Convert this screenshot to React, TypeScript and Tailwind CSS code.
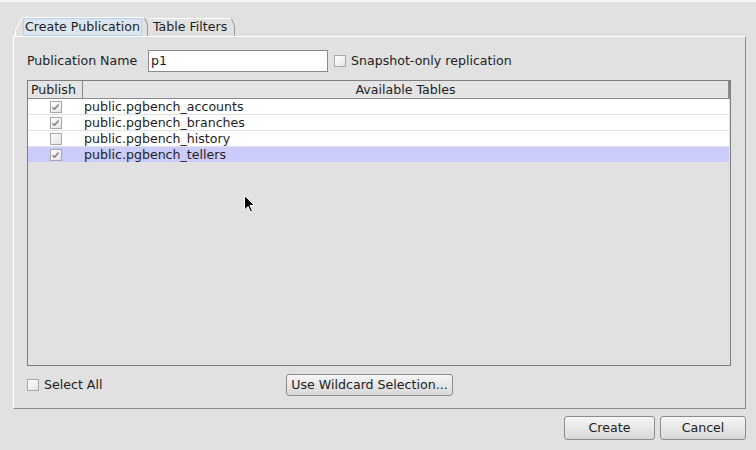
import React from "react";

const Check = ({ checked }: { checked: boolean }) => (
  <div className="w-[12px] h-[12px] border border-[#a8a8a8] bg-gradient-to-br from-[#ffffff] to-[#e4e4e4] flex items-center justify-center">
    {checked && (
      <svg width="9" height="8" viewBox="0 0 9 8">
        <path d="M1.5 4.2 L3.5 6.2 L7.5 1.5" stroke="#7a7a7a" strokeWidth="1.4" fill="none" />
      </svg>
    )}
  </div>
);

const rows = [
  { name: "public.pgbench_accounts", checked: true, sel: false },
  { name: "public.pgbench_branches", checked: true, sel: false },
  { name: "public.pgbench_history", checked: false, sel: false },
  { name: "public.pgbench_tellers", checked: true, sel: true },
];

const btn =
  "border border-[#8c8c8c] rounded-[3px] bg-gradient-to-b from-[#f6f6f6] to-[#d8d8d8] text-[12.6px] text-[#222] flex items-center justify-center";

export default function App() {
  return (
    <div
      className="w-[756px] h-[450px] bg-[#e1e1e1] relative overflow-hidden text-[#1e1e1e] text-[12.6px]"
      style={{ fontFamily: '"DejaVu Sans", sans-serif' }}
    >
      <div className="h-[2px] bg-[#f4f4f4]" />
      <div className="pl-[13px] pr-[10px] pt-[15px]">
        {/* tabs */}
        <div className="flex h-[19px] items-end">
          <div className="h-[19px] ml-[2px] pl-[8px] pr-[6px] flex items-center relative">
            <svg className="absolute left-0 top-0" width="9" height="19" viewBox="0 0 9 19">
              <path d="M0.5 19 L0.5 13 L7 1 L9 0.5" stroke="#ffffff" fill="none" />
            </svg>
            <div className="absolute left-[8px] right-[1px] top-0 border-t border-[#ffffff]" />
            <span className="leading-[16px] bg-[#dce6f0] border border-[#b8cfe5] px-[1px]">
              Create Publication
            </span>
            <svg className="absolute right-0 top-0" width="4" height="19" viewBox="0 0 4 19">
              <path d="M0.5 0.5 L3.5 8 L3.5 19" stroke="#9a9a9a" fill="none" />
            </svg>
          </div>
          <div className="h-[18px] ml-[1px] pl-[4px] pr-[8px] flex items-center relative">
            <div className="absolute left-0 right-[4px] top-0 border-t border-[#ffffff]" />
            <span className="leading-[16px]">Table Filters</span>
            <svg className="absolute right-0 top-0" width="4" height="18" viewBox="0 0 4 18">
              <path d="M0.5 0.5 L3.5 8 L3.5 18" stroke="#9a9a9a" fill="none" />
            </svg>
          </div>
        </div>
        {/* panel */}
        <div className="h-[373px] border-t border-l border-[#ffffff] border-r border-b border-r-[#8a8a8a] border-b-[#8a8a8a] px-[13px] pt-[13px]">
          <div className="flex items-center h-[22px]">
            <span className="w-[121px]">Publication Name</span>
            <div className="w-[180px] h-[22px] border border-[#8a8a8a] bg-white pl-[2px] flex items-center">
              p1
            </div>
            <div className="ml-[6px]"><Check checked={false} /></div>
            <span className="ml-[5px]">Snapshot-only replication</span>
          </div>
          {/* table */}
          <div className="mt-[8px] w-[704px] h-[286px] border border-[#7e7e7e] flex flex-col">
            <div className="flex h-[18px] border-b border-[#8a8a8a] bg-[#e4e4e4]">
              <div className="w-[55px] border-r border-[#8a8a8a] leading-[17px] pl-[3px]">
                Publish
              </div>
              <div className="flex-1 text-center leading-[17px] border-r-[2px] border-[#8a8a8a]">
                Available Tables
              </div>
            </div>
            {rows.map((r) => (
              <div
                key={r.name}
                className={`flex h-[16px] border-b border-[#e2e2e2] mr-[1px] ${r.sel ? "bg-[#ccccfa]" : "bg-white"}`}
              >
                <div className="w-[55px] flex items-center justify-center">
                  <Check checked={r.checked} />
                </div>
                <div className="flex-1 leading-[15px] pl-[1px]">{r.name}</div>
              </div>
            ))}
          </div>
          <div className="flex items-center mt-[8px] h-[22px]">
            <div className="w-[259px] flex items-center">
              <Check checked={false} />
              <span className="ml-[5px]">Select All</span>
            </div>
            <div className={`${btn} w-[167px] h-[22px]`}>Use Wildcard Selection...</div>
          </div>
        </div>
        <div className="flex justify-end gap-[5px] mt-[7px]">
          <div className={`${btn} w-[91px] h-[24px]`}>Create</div>
          <div className={`${btn} w-[86px] h-[24px]`}>Cancel</div>
        </div>
      </div>
      <svg className="absolute left-[244px] top-[195px]" width="12" height="19" viewBox="0 0 12 19">
        <path d="M0.5 0.5 L0.5 15 L4 11.5 L6.5 17 L8.5 16 L6 10.5 L10.5 10.5 Z" fill="#000" stroke="#fff" strokeWidth="1" />
      </svg>
    </div>
  );
}
